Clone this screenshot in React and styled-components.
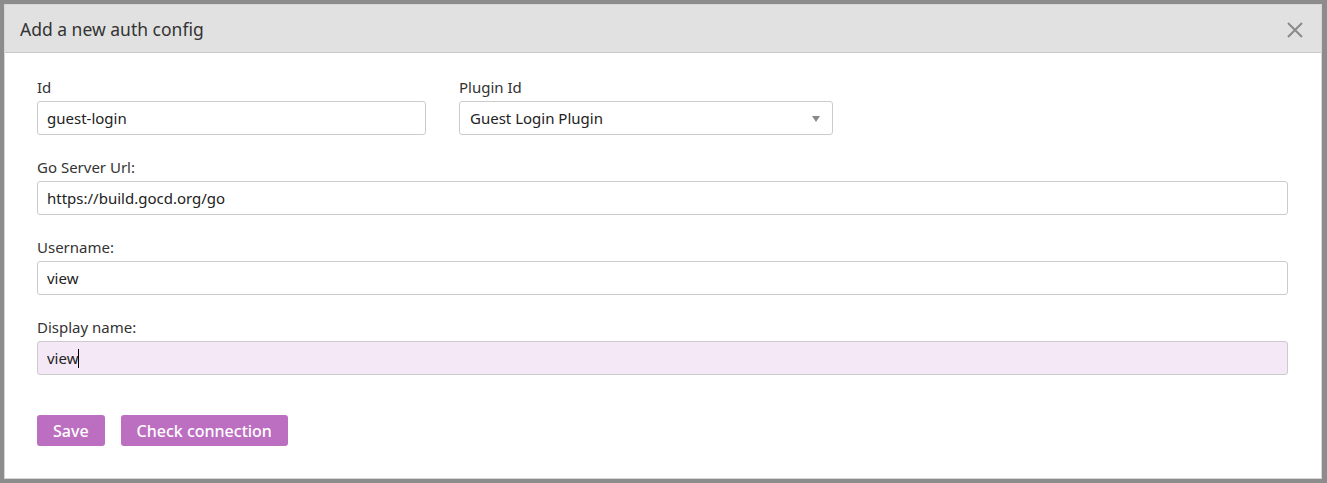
import styled, { createGlobalStyle } from 'styled-components';

const GlobalStyle = createGlobalStyle`
  html, body {
    margin: 0;
    padding: 0;
    background: #8c8c8c;
  }

  body {
    font-family: "Noto Sans", "Open Sans", sans-serif;
    color: #333;
  }
`;

const Page = styled.div`
  padding: 4px 5px 4px 4px;
`;

const Modal = styled.div`
  background: #fff;
  border: 1px solid #d6d6d6;
  box-sizing: border-box;
  height: 475px;
`;

const Header = styled.div`
  display: flex;
  align-items: center;
  justify-content: space-between;
  height: 47px;
  padding: 0 15px;
  background: #e1e1e1;
  border-bottom: 1px solid #cacaca;
`;

const Title = styled.h2`
  margin: 0;
  font-size: 17.5px;
  font-weight: 400;
  color: #333;
`;

const CloseButton = styled.button`
  border: 0;
  background: none;
  padding: 0;
  width: 20px;
  height: 20px;
  display: flex;
  align-items: center;
  justify-content: center;
  cursor: pointer;
  margin-right: 1px;
  margin-top: 2px;
`;

const Body = styled.div`
  display: flex;
  flex-direction: column;
  gap: 22px;
  padding: 24px 33px 0 32px;
`;

const Row = styled.div`
  display: flex;
  gap: 33px;
`;

const Field = styled.div`
  display: flex;
  flex-direction: column;
  width: ${(p) => p.width || '100%'};
`;

const Label = styled.label`
  font-size: 15px;
  line-height: 20px;
  margin-bottom: 4px;
  color: #333;
`;

const InputWrap = styled.div`
  position: relative;
`;

const Input = styled.input`
  box-sizing: border-box;
  height: 34px;
  width: 100%;
  padding: 0 9px;
  border: 1px solid #cbcbcb;
  border-radius: 3px;
  background: ${(p) => (p.$active ? '#f4e8f6' : '#fff')};
  font-family: inherit;
  font-size: 15px;
  color: #222;
  outline: none;
`;

const Caret = styled.span`
  position: absolute;
  left: 41px;
  top: 8px;
  width: 1px;
  height: 19px;
  background: #000;
`;

const SelectBox = styled.div`
  position: relative;
  box-sizing: border-box;
  height: 34px;
  display: flex;
  align-items: center;
  padding: 0 10px;
  border: 1px solid #cbcbcb;
  border-radius: 3px;
  font-size: 15px;
  color: #222;
`;

const Arrow = styled.span`
  position: absolute;
  right: 12px;
  top: 14px;
  width: 0;
  height: 0;
  border-left: 4px solid transparent;
  border-right: 4px solid transparent;
  border-top: 6px solid #8a8a8a;
`;

const Actions = styled.div`
  display: flex;
  gap: 16px;
  margin-top: 18px;
`;

const Button = styled.button`
  height: 31px;
  padding: 0 16px;
  border: 0;
  border-radius: 3px;
  background: #bc6fc0;
  color: #fff;
  font-family: inherit;
  font-size: 16px;
  font-weight: 500;
  cursor: pointer;
`;

function CloseIcon() {
  return (
    <svg width="18" height="18" viewBox="0 0 18 18">
      <path d="M2 2 L16 16 M16 2 L2 16" stroke="#8a8a8a" strokeWidth="2" />
    </svg>
  );
}

function App() {
  return (
    <>
      <GlobalStyle />
      <Page>
        <Modal>
          <Header>
            <Title>Add a new auth config</Title>
            <CloseButton aria-label="close">
              <CloseIcon />
            </CloseButton>
          </Header>
          <Body>
            <Row>
              <Field width="389px">
                <Label>Id</Label>
                <Input defaultValue="guest-login" />
              </Field>
              <Field width="374px">
                <Label>Plugin Id</Label>
                <SelectBox>
                  Guest Login Plugin
                  <Arrow />
                </SelectBox>
              </Field>
            </Row>
            <Field>
              <Label>Go Server Url:</Label>
              <Input defaultValue="https://build.gocd.org/go" />
            </Field>
            <Field>
              <Label>Username:</Label>
              <Input defaultValue="view" />
            </Field>
            <Field>
              <Label>Display name:</Label>
              <InputWrap>
                <Input $active defaultValue="view" />
                <Caret />
              </InputWrap>
            </Field>
            <Actions>
              <Button>Save</Button>
              <Button>Check connection</Button>
            </Actions>
          </Body>
        </Modal>
      </Page>
    </>
  );
}

export default App;
